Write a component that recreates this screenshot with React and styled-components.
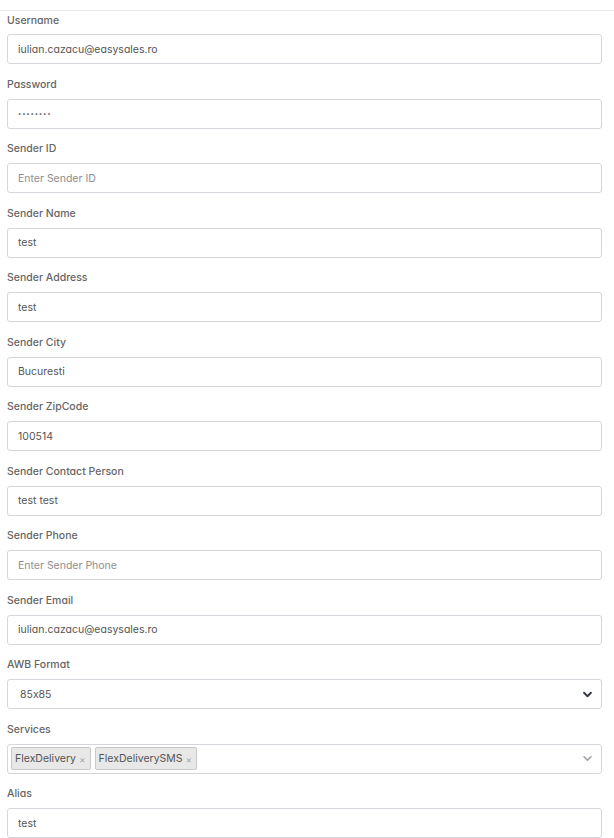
import React from 'react';
import styled, { createGlobalStyle } from 'styled-components';

const GlobalStyle = createGlobalStyle`
	html, body {
		margin: 0;
		padding: 0;
		background: #fff;
	}
	body {
		font-family: Inter, 'Noto Sans', sans-serif;
		font-feature-settings: 'cv11' 1, 'calt' 0;
	}
`;

const fields = [
	{ label: 'Username', value: 'iulian.cazacu@easysales.ro' },
	{ label: 'Password', value: '12345678', type: 'password' },
	{ label: 'Sender ID', placeholder: 'Enter Sender ID' },
	{ label: 'Sender Name', value: 'test' },
	{ label: 'Sender Address', value: 'test' },
	{ label: 'Sender City', value: 'Bucuresti' },
	{ label: 'Sender ZipCode', value: '100514' },
	{ label: 'Sender Contact Person', value: 'test test' },
	{ label: 'Sender Phone', placeholder: 'Enter Sender Phone' },
	{ label: 'Sender Email', value: 'iulian.cazacu@easysales.ro' },
];

function Chevron({ color, weight }) {
	return (
		<svg width='11' height='11' viewBox='0 0 16 16' fill='none'>
			<path
				d='M3 5.5 8 10.5l5-5'
				stroke={color}
				strokeWidth={weight}
				strokeLinecap='round'
				strokeLinejoin='round'
			/>
		</svg>
	);
}

export default function App() {
	return (
		<>
			<GlobalStyle />
			<Page>
				<Form>
					{fields.map((f) => (
						<Group key={f.label}>
							<Label>{f.label}</Label>
							<Input
								type={f.type || 'text'}
								defaultValue={f.value}
								placeholder={f.placeholder}
								secret={f.type === 'password'}
								readOnly
							/>
						</Group>
					))}
					<Group>
						<Label>AWB Format</Label>
						<SelectBox>
							<SelectText>85x85</SelectText>
							<Chevron color='#343a40' weight={2.8} />
						</SelectBox>
					</Group>
					<Group>
						<Label>Services</Label>
						<SelectBox multi>
							<Tags>
								<Tag>
									FlexDelivery <TagX>×</TagX>
								</Tag>
								<Tag>
									FlexDeliverySMS <TagX>×</TagX>
								</Tag>
							</Tags>
							<Chevron color='#a0a0a0' weight={2.4} />
						</SelectBox>
					</Group>
					<Group>
						<Label>Alias</Label>
						<Input type='text' defaultValue='test' readOnly />
					</Group>
				</Form>
			</Page>
		</>
	);
}

const Page = styled.div`
	width: 614px;
	min-height: 838px;
	padding-top: 10px;
	box-sizing: border-box;
`;

const Form = styled.div`
	border-top: 1px solid #e9e9e9;
	padding: 0 12px 0 7px;
	display: flex;
	flex-direction: column;
`;

const Group = styled.div`
	display: flex;
	flex-direction: column;
	margin-bottom: 11px;
`;

const Label = styled.label`
	font-size: 10.5px;
	line-height: 16.6px;
	font-weight: 500;
	color: #666;
	padding-top: 1.5px;
	margin-bottom: 5.4px;
`;

const Input = styled.input`
	box-sizing: border-box;
	height: 30px;
	width: 100%;
	border: 1px solid #d3d7dc;
	border-radius: 3px;
	padding: 0 10px;
	font-family: inherit;
	font-feature-settings: 'cv11' 1, 'calt' 0;
	font-size: ${({ secret }) => (secret ? '6px' : '10.5px')};
	letter-spacing: ${({ secret }) => (secret ? '0.8px' : 'normal')};
	color: #555;
	background: #fff;
	outline: none;

	&::placeholder {
		color: #8e8e8e;
	}
`;

const SelectBox = styled.div`
	box-sizing: border-box;
	height: 30px;
	border: 1px solid #d3d7dc;
	border-radius: 3px;
	display: flex;
	align-items: center;
	justify-content: space-between;
	padding: ${({ multi }) => (multi ? '0 8px 0 3px' : '0 8px 0 11px')};
	font-size: 10.5px;
	color: #555;
`;

const SelectText = styled.span`
	padding-left: 1px;
`;

const Tags = styled.div`
	display: flex;
	gap: 4px;
`;

const Tag = styled.span`
	display: flex;
	align-items: center;
	height: 23px;
	box-sizing: border-box;
	padding: 0 4px 0 3px;
	background: #e8e8e8;
	border: 1px solid #c9c9c9;
	border-radius: 2px;
	font-size: 10.5px;
	color: #555;
`;

const TagX = styled.span`
	color: #a8a8a8;
	font-size: 10px;
	margin-left: 3px;
`;
